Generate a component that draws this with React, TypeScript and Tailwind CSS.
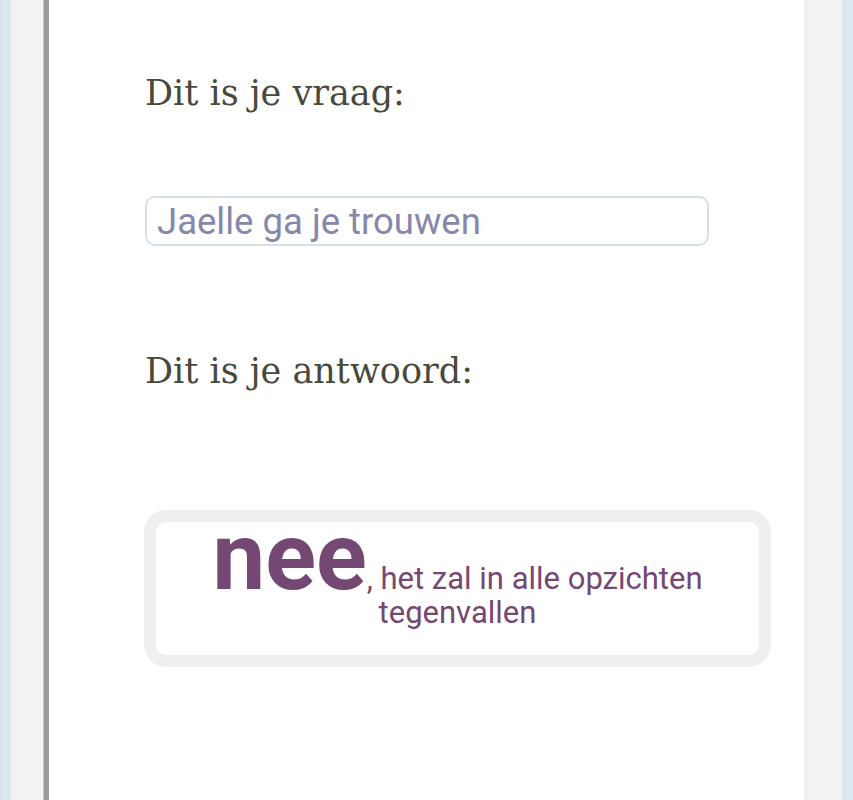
import React from "react";

const serif = { fontFamily: '"DejaVu Serif", "Liberation Serif", serif' };
const sans = { fontFamily: 'Roboto, "Noto Sans", sans-serif' };

export default function App() {
  return (
    <div className="flex h-[800px] w-full overflow-hidden bg-[#dde7ef]">
      {/* left page edge */}
      <div className="w-[3px] bg-[#d5e1eb]" />
      <div className="w-[8px]" />
      <div className="w-[32px] bg-[#f2f2f0]" />
      <div className="w-[1px] bg-[#c9c9c7]" />
      <div className="w-[5px] bg-[#9b9b9b]" />

      {/* main panel */}
      <main className="flex-1 bg-white pl-[96px] pt-[70px]">
        <h2 className="text-[35px] leading-[46px] text-[#48483c]" style={serif}>
          Dit is je vraag:
        </h2>

        <input
          readOnly
          defaultValue="Jaelle ga je trouwen"
          className="mt-[80px] block h-[50px] w-[564px] rounded-[10px] border-2 border-[#d5e0ea] px-[10px] text-[36.5px] leading-none text-[#8687ab] outline-none"
          style={sans}
        />

        <h2 className="mt-[102px] text-[35px] leading-[46px] text-[#48483c]" style={serif}>
          Dit is je antwoord:
        </h2>

        <div className="mt-[116px] -ml-px w-[627px] rounded-[22px] border-[12px] border-[#efefef] bg-white">
          <p
            className="pb-[25px] pt-[35px] text-center text-[31px] leading-[34px] text-[#744872]"
            style={sans}
          >
            <span className="text-[94px] font-bold leading-[0px]">nee</span>, het zal in alle opzichten tegenvallen
          </p>
        </div>
      </main>

      {/* right page edge */}
      <div className="w-[5px] bg-[#eeeeec]" />
      <div className="w-[33px] bg-[#f2f2f0]" />
      <div className="w-[11px]" />
    </div>
  );
}
